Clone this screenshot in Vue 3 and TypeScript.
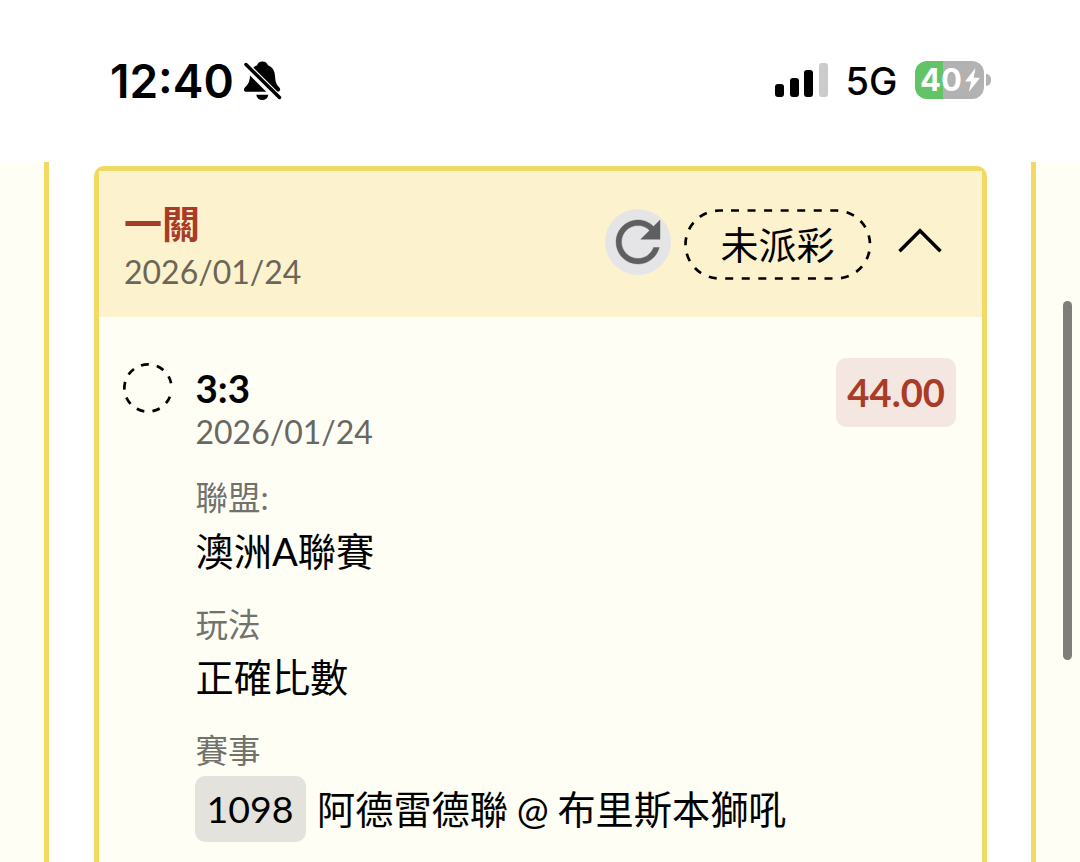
<template>
  <div class="screen">
    <header class="status-bar">
      <div class="status-left">
        <span class="clock">{{ clock }}</span>
        <svg class="bell" width="40" height="42" viewBox="0 0 40 42">
          <path
            d="M19.500 1.400c2.800 0 4.800 1.500 5.400 3.800 4.600 1.600 6.800 5.600 7.100 10.600.4 6.200 1.200 8.800 4.300 11.600 1.500 1.400 1.200 4.400-1.500 4.400H3.400c-2.600 0-3.200-2.600-1.500-4.300 3.300-3 4.700-5.500 5.100-11.700.3-5 2.500-9 7.100-10.600.6-2.300 2.600-3.800 5.400-3.800z"
          />
          <path d="M13.200 34.700h12.200c-.6 3.300-3 5.300-6.100 5.300s-5.500-2-6.100-5.300z" />
          <path class="bell-gap" d="M1.500 4.300L36.500 39.300" />
          <path class="bell-slash" d="M3 4.500L36.500 37.500" />
        </svg>
      </div>
      <div class="status-right">
        <div class="signal">
          <i
            v-for="(bar, index) in signalBars"
            :key="index"
            class="signal-bar"
            :class="{ off: !bar.on }"
            :style="{ height: bar.height + 'px' }"
          ></i>
        </div>
        <span class="network">5G</span>
        <div class="battery">
          <div class="battery-body">
            <span class="battery-level">{{ battery }}</span>
            <svg width="17" height="26" viewBox="0 0 17 26">
              <path d="M11.500 1L1 14.600h6.200L4.800 25 16 10.800H9.600z" fill="#fff" />
            </svg>
          </div>
          <div class="battery-nub"></div>
        </div>
      </div>
    </header>

    <main class="content">
      <div class="rail rail-left"></div>

      <section class="bet-card">
        <div class="card-header">
          <div class="card-title">
            <h2>一關</h2>
            <p>{{ date }}</p>
          </div>
          <button class="refresh-btn" type="button">
            <svg width="66" height="66" viewBox="0 0 24 24">
              <path
                d="M17.650 6.350C16.200 4.900 14.210 4 12 4c-4.420 0-7.990 3.580-7.990 8s3.570 8 7.990 8c3.730 0 6.840-2.550 7.730-6h-2.080c-.820 2.330-3.040 4-5.650 4-3.310 0-6-2.690-6-6s2.690-6 6-6c1.660 0 3.140.690 4.220 1.780L13 11h7V4l-2.350 2.350z"
                fill="#5f5f61"
                stroke="#5f5f61"
                stroke-width="0.150"
              />
            </svg>
          </button>
          <div class="status-pill">
            <svg class="pill-outline" width="188" height="72" viewBox="0 0 188 72">
              <path
                d="M47 1.500H152A34 34 0 0 1 152 69.500H35.500A34 34 0 0 1 35.500 1.500H46.500"
                fill="none"
                stroke="#000"
                stroke-width="2.700"
                stroke-dasharray="8 8.550"
              />
            </svg>
            <span>未派彩</span>
          </div>
          <svg
            class="chevron"
            :class="{ closed: !open }"
            width="46"
            height="28"
            viewBox="0 0 46 28"
            @click="open = !open"
          >
            <path d="M2.500 25.300L23 4.800L43.500 25.300" fill="none" stroke="#000" stroke-width="3.500" />
          </svg>
        </div>

        <div v-if="open" class="card-body">
          <svg class="pending" width="52" height="52" viewBox="0 0 52 52">
            <path
              d="M47.900 34.700A23.600 23.600 0 1 1 49.100 21.300"
              fill="none"
              stroke="#000"
              stroke-width="2.700"
              stroke-dasharray="7.700 8.150"
            />
          </svg>
          <div class="details">
            <div class="score">3:3</div>
            <div class="date">{{ date }}</div>
            <div v-for="field in fields" :key="field.label" class="field">
              <div class="field-label">{{ field.label }}</div>
              <div class="field-value" :class="{ coded: field.code }">
                <span v-if="field.code" class="code">{{ field.code }}</span>
                <span>{{ field.value }}</span>
              </div>
            </div>
          </div>
          <div class="odds">44.00</div>
        </div>
      </section>

      <div class="rail rail-right">
        <div class="scroll-thumb"></div>
      </div>
    </main>
  </div>
</template>

<script setup lang="ts">
import { ref } from 'vue'

interface Field {
  label: string
  value: string
  code?: string
}

const clock = ref('12:40')
const battery = ref(40)
const date = ref('2026/01/24')
const open = ref(true)

const signalBars = [
  { height: 13, on: true },
  { height: 19, on: true },
  { height: 27, on: true },
  { height: 34, on: false }
]

const fields: Field[] = [
  { label: '聯盟:', value: '澳洲A聯賽' },
  { label: '玩法', value: '正確比數' },
  { label: '賽事', value: '阿德雷德聯 @ 布里斯本獅吼', code: '1098' }
]
</script>

<style>
body {
  margin: 0;
  background: #fff;
}
</style>

<style scoped>
.screen {
  display: flex;
  flex-direction: column;
  width: 1080px;
  height: 862px;
  overflow: hidden;
  background: #fff;
  color: #000;
  font-family: Lato, "Noto Sans CJK TC", sans-serif;
}

.status-bar {
  display: flex;
  flex: none;
  justify-content: space-between;
  box-sizing: border-box;
  height: 162px;
  padding: 60px 89px 0 110px;
  font-family: Inter, sans-serif;
  color: #000;
}

.status-left,
.status-right {
  display: flex;
  height: 42px;
}

.clock {
  width: 133px;
  font-size: 46px;
  font-weight: 600;
  line-height: 42px;
  white-space: nowrap;
}

.bell-gap {
  stroke: #fff;
  stroke-width: 8;
}

.bell-slash {
  stroke: #000;
  stroke-width: 3.500;
  stroke-linecap: round;
}

.signal {
  display: flex;
  align-items: flex-end;
  gap: 5.400px;
  height: 37px;
  margin-right: 17.500px;
}

.signal-bar {
  width: 9.200px;
  border-radius: 3px;
  background: #000;
}

.signal-bar.off {
  background: #cbcbcb;
}

.network {
  width: 69.500px;
  font-size: 38px;
  font-weight: 500;
  line-height: 43px;
}

.battery {
  display: flex;
  align-items: center;
  gap: 2px;
  height: 40px;
}

.battery-body {
  display: flex;
  align-items: center;
  box-sizing: border-box;
  width: 69px;
  height: 38px;
  padding-left: 5px;
  border-radius: 12px;
  background: linear-gradient(to right, #62c466 28px, #b2b2b2 28px);
}

.battery-level {
  width: 44px;
  font-size: 31px;
  font-weight: 700;
  line-height: 38px;
  color: #fff;
}

.battery-nub {
  width: 5px;
  height: 12px;
  border-radius: 0 6px 6px 0;
  background: #b2b2b2;
}

.content {
  display: flex;
  flex: 1;
  min-height: 0;
}

.rail {
  flex: none;
  box-sizing: border-box;
  width: 49px;
  background: #fefef5;
}

.rail-left {
  border-right: 5px solid #f0da64;
}

.rail-right {
  padding: 139px 0 0 27px;
  border-left: 5px solid #f0da64;
}

.scroll-thumb {
  width: 9px;
  height: 359px;
  border-radius: 5px;
  background: #7e7e7a;
}

.bet-card {
  flex: none;
  box-sizing: border-box;
  width: 893px;
  height: 800px;
  margin: 4px 44.500px 0;
  border: 5.500px solid #f0da64;
  border-radius: 10px;
  background: #fefef5;
}

.card-header {
  display: flex;
  box-sizing: border-box;
  height: 146px;
  padding: 38px 39px 0 25.500px;
  background: #fdf2ce;
}

.card-title {
  width: 481px;
  margin-top: -9px;
}

.card-title h2 {
  margin: 0;
  font-size: 38px;
  font-weight: 700;
  line-height: 46px;
  color: #a83c28;
}

.card-title p {
  margin: 2px 0 0;
  font-size: 32px;
  line-height: 48px;
  color: #6b6657;
}

.refresh-btn {
  display: flex;
  flex: none;
  width: 66px;
  height: 66px;
  padding: 0;
  border: none;
  border-radius: 50%;
  background: #e5e5e7;
  cursor: pointer;
}

.status-pill {
  position: relative;
  flex: none;
  width: 188px;
  height: 72px;
  margin-left: 13px;
  font-size: 38px;
  line-height: 70px;
  text-align: center;
}

.pill-outline {
  position: absolute;
  top: 0;
  left: 0;
}

.chevron {
  flex: none;
  margin: 17px 0 0 25px;
  cursor: pointer;
}

.chevron.closed {
  transform: rotate(180deg);
}

.card-body {
  display: flex;
  align-items: flex-start;
  padding: 41px 25.500px 0 23px;
}

.pending {
  flex: none;
  margin-top: 4px;
}

.details {
  flex: 1;
  margin-left: 22px;
}

.score {
  margin-top: 8px;
  font-size: 38.500px;
  font-weight: 700;
  line-height: 44px;
}

.date {
  font-size: 32px;
  line-height: 43px;
  color: #686862;
}

.field {
  margin-top: 21px;
}

.date + .field {
  margin-top: 22px;
}

.field-label {
  font-size: 32.500px;
  line-height: 46px;
  color: #72726d;
}

.field-value {
  display: flex;
  align-items: center;
  height: 59.500px;
  font-size: 38.200px;
  line-height: 58px;
  white-space: nowrap;
}

.field-value.coded {
  margin-left: -1px;
  padding-top: 5px;
  font-size: 38.200px;
  word-spacing: -1px;
}

.code {
  margin-right: 11.500px;
  padding: 0 12px;
  border-radius: 10px;
  background: #e3e2dc;
  font-size: 37.500px;
  line-height: 66px;
}

.odds {
  padding: 0 11px;
  border-radius: 10px;
  background: #f4e6e0;
  font-size: 38.200px;
  font-weight: 700;
  line-height: 69px;
  color: #a83c28;
}
</style>
